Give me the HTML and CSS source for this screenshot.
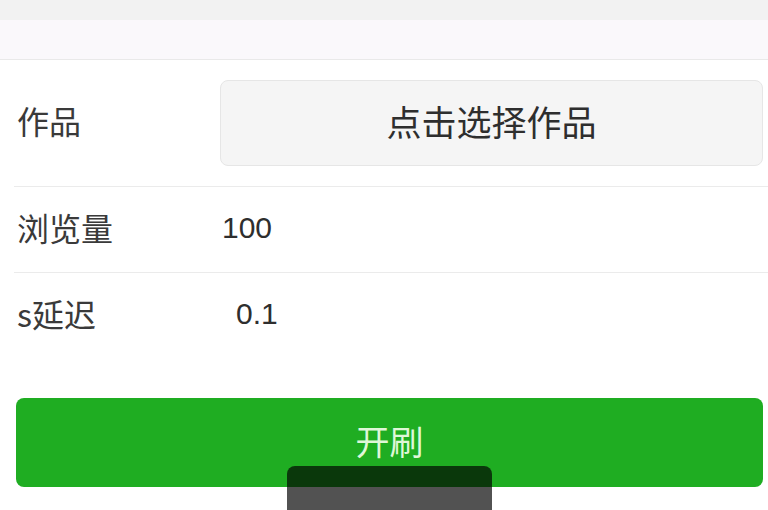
FILE: index.html
```html
<!DOCTYPE html>
<html lang="zh-CN">
<head>
<meta charset="utf-8">
<link rel="stylesheet" href="styles.css">
</head>
<body>
<div class="page">
  <div class="header"><div class="header-top"></div></div>
  <div class="form">
    <div class="row row-work">
      <div class="label">作品</div>
      <div class="picker">点击选择作品</div>
    </div>
    <div class="row row-views">
      <div class="label">浏览量</div>
      <div class="value">100</div>
    </div>
    <div class="row row-delay">
      <div class="label">s延迟</div>
      <div class="value value-delay">0.1</div>
    </div>
  </div>
  <div class="submit">开刷</div>
  <div class="toast"></div>
</div>
</body>
</html>
```
FILE: styles.css
```css
html, body {
  margin: 0;
  padding: 0;
  background: #ffffff;
}
.page {
  position: relative;
  width: 768px;
  height: 510px;
  overflow: hidden;
  font-family: "Noto Sans CJK SC", "Noto Sans", "Liberation Sans", sans-serif;
  color: #333333;
}
.header {
  height: 59px;
  background: #faf8fb;
  border-bottom: 1px solid #e9e9e9;
}
.header-top {
  height: 20px;
  background: #f2f2f2;
}
.form {
  display: flex;
  flex-direction: column;
}
.row {
  display: flex;
  align-items: center;
  margin-left: 14px;
  padding-left: 3px;
  border-bottom: 1px solid #ebebeb;
}
.row-work {
  height: 126px;
}
.row-views {
  height: 85px;
}
.row-delay {
  height: 85px;
  border-bottom: none;
}
.label {
  width: 203px;
  flex: none;
  font-size: 32px;
  line-height: 1;
  color: #3a3a3a;
  padding-bottom: 6px;
}
.picker {
  flex: 1;
  margin-right: 5px;
  height: 86px;
  box-sizing: border-box;
  padding-bottom: 6px;
  display: flex;
  align-items: center;
  justify-content: center;
  background: #f5f5f5;
  border: 1px solid #e6e6e6;
  border-radius: 8px;
  font-size: 35px;
  color: #2e2e2e;
}
.value {
  font-family: "Liberation Sans", "Noto Sans", sans-serif;
  font-size: 30px;
  color: #2e2e2e;
  padding-left: 2px;
  padding-bottom: 4px;
}
.value-delay {
  padding-left: 16px;
}
.submit {
  margin: 40px 5px 0 16px;
  height: 89px;
  box-sizing: border-box;
  padding-bottom: 4px;
  border-radius: 8px;
  background: #1fad22;
  color: #dff7d8;
  font-size: 34px;
  display: flex;
  align-items: center;
  justify-content: center;
}
.toast {
  position: absolute;
  left: 287px;
  top: 466px;
  width: 205px;
  height: 60px;
  border-radius: 8px 8px 0 0;
  background: rgba(0, 0, 0, 0.68);
}
```
